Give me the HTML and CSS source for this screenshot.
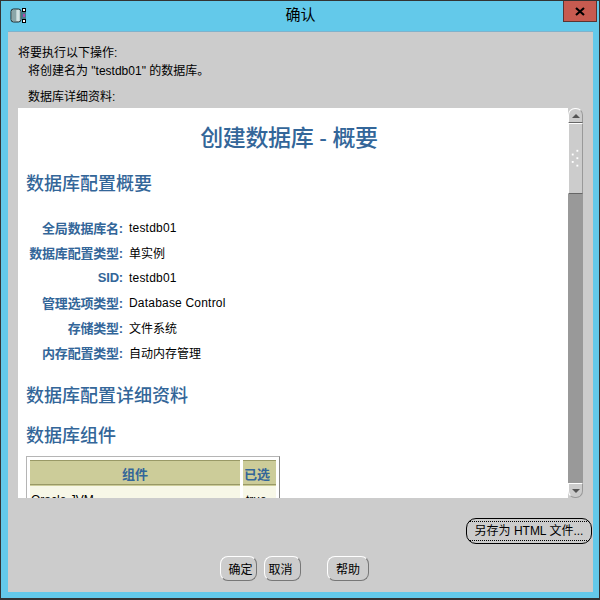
FILE: index.html
```html
<!DOCTYPE html>
<html lang="zh-CN">
<head>
    <meta charset="UTF-8">
    <title>确认</title>
    <link rel="stylesheet" href="styles.css">
</head>
<body>
    <div class="window">
        <div class="titlebar">
            <svg class="app-icon" width="17" height="16" viewBox="0 0 17 16">
                <rect x="1" y="1" width="10" height="13" rx="2.5" fill="#b9cfd0" stroke="#1c2b2e"/>
                <path d="M3 2v11M5 2v11" stroke="#5d7c80"/>
                <path d="M8 2v11" stroke="#eef5f5"/>
                <rect x="12" y="0" width="4" height="15" fill="#4a7c88"/>
                <rect x="12.5" y="0.5" width="3" height="3" fill="#fff" stroke="#000"/>
                <rect x="12.5" y="11.5" width="3" height="3" fill="#fff" stroke="#000"/>
                <rect x="13" y="6" width="2" height="3" fill="#b04bb0"/>
            </svg>
            <span class="title">确认</span>
            <div class="close">
                <svg width="10" height="9" viewBox="0 0 10 9">
                    <path d="M1 1l8 7M9 1l-8 7" stroke="#000" stroke-width="2.2"/>
                </svg>
            </div>
        </div>
        <div class="client">
            <p class="line">将要执行以下操作:</p>
            <p class="line indent">将创建名为 "testdb01" 的数据库。</p>
            <p class="line indent details">数据库详细资料:</p>
            <div class="pane">
                <div class="doc">
                    <h1>创建数据库 - 概要</h1>
                    <h2 class="first">数据库配置概要</h2>
                    <div class="summary">
                        <span class="key">全局数据库名:</span><span class="latin">testdb01</span>
                        <span class="key">数据库配置类型:</span><span>单实例</span>
                        <span class="key">SID:</span><span class="latin">testdb01</span>
                        <span class="key">管理选项类型:</span><span class="latin">Database Control</span>
                        <span class="key">存储类型:</span><span>文件系统</span>
                        <span class="key">内存配置类型:</span><span>自动内存管理</span>
                    </div>
                    <h2 class="detail">数据库配置详细资料</h2>
                    <h2 class="comp">数据库组件</h2>
                    <table class="comp-table">
                        <tr><th class="col-name">组件</th><th class="col-sel">已选</th></tr>
                        <tr><td>Oracle JVM</td><td class="cell-sel">true</td></tr>
                    </table>
                </div>
                <div class="scrollbar">
                    <div class="arrow up"><i></i></div>
                    <div class="thumb">
                        <svg width="14" height="24" viewBox="0 0 14 24">
                            <g fill="#fff">
                                <rect x="8" y="0" width="2" height="2"/>
                                <rect x="3" y="4" width="2" height="2"/>
                                <rect x="8" y="8" width="2" height="2"/>
                                <rect x="3" y="12" width="2" height="2"/>
                                <rect x="8" y="16" width="2" height="2"/>
                            </g>
                        </svg>
                    </div>
                    <div class="track"></div>
                    <div class="arrow down"><i></i></div>
                </div>
            </div>
            <div class="save-row">
                <button class="btn save"><span>另存为 HTML 文件...</span></button>
            </div>
            <div class="actions">
                <button class="btn ok">确定</button>
                <button class="btn cancel">取消</button>
                <button class="btn help">帮助</button>
            </div>
        </div>
    </div>
</body>
</html>
```

FILE: styles.css
```css
html, body {
    margin: 0;
    height: 100%;
}
body {
    font-family: "Liberation Sans", "Noto Sans CJK SC", sans-serif;
    font-size: 12px;
    color: #000;
}
.window {
    box-sizing: border-box;
    width: 600px;
    height: 600px;
    display: flex;
    flex-direction: column;
    background-color: #63c9ea;
    border: 1px solid #333;
    border-bottom-width: 2px;
    padding: 0 6px 6px 7px;
}
.titlebar {
    height: 30px;
    flex: none;
    display: flex;
    align-items: flex-start;
    justify-content: center;
    position: relative;
}
.app-icon {
    position: absolute;
    left: 2px;
    top: 7px;
}
.title {
    font-size: 15px;
    line-height: 28px;
}
.close {
    position: absolute;
    right: -4px;
    top: 0;
    box-sizing: border-box;
    width: 34px;
    height: 21px;
    background-color: #c75b50;
    border: 1px solid #5a3432;
    border-top: none;
    display: flex;
    align-items: center;
    justify-content: center;
}
.client {
    flex: 1;
    min-height: 0;
    background-color: #ccc;
    border-top: 1px solid #7fb2cc;
    padding: 12px 10px 0 10px;
    display: flex;
    flex-direction: column;
}
.line {
    margin: 0;
    line-height: 18px;
}
.indent {
    padding-left: 10px;
}
.details {
    margin-top: 8px;
    height: 20px;
}
.pane {
    flex: none;
    height: 390px;
    display: flex;
}
.doc {
    flex: 1;
    background-color: #fff;
    overflow: hidden;
    padding-left: 8px;
    color: #336699;
}
h1 {
    margin: 15px 0 0 0;
    padding-right: 16px;
    font-size: 23px;
    letter-spacing: -0.4px;
    line-height: 30px;
    font-weight: 500;
    text-align: center;
}
h2 {
    margin: 0;
    font-size: 18px;
    line-height: 24px;
    font-weight: 500;
}
h2.first {
    margin-top: 19px;
}
h2.detail {
    margin-top: 19px;
}
h2.comp {
    margin-top: 16px;
}
.summary {
    display: grid;
    grid-template-columns: 97px 1fr;
    column-gap: 6px;
    grid-auto-rows: 25px;
    align-items: center;
    margin-top: 19px;
    color: #000;
}
.latin {
    letter-spacing: 0.2px;
}
.key {
    font-size: 13px;
    font-weight: 700;
    letter-spacing: -0.2px;
    color: #336699;
    text-align: right;
    white-space: nowrap;
}
.comp-table {
    margin-top: 8px;
    width: 254px;
    border: 1px solid #b5b5b5;
    border-right-color: #888;
    border-collapse: separate;
    border-spacing: 3px 0;
    padding: 3px 0 0 0;
    color: #000;
}
.comp-table th {
    height: 22px;
    padding: 0 0 1px 0;
    background-color: #cccc99;
    border-top: 1px solid #999966;
    border-bottom: 1px solid #999966;
    color: #336699;
    font-size: 13px;
    font-weight: 700;
    vertical-align: bottom;
}
.col-sel {
    width: 32px;
}
.comp-table th.col-sel {
    text-align: left;
    padding-left: 1px;
}
.comp-table td {
    padding: 7px 1px 4px 1px;
    background-color: #f7f7e7;
    border-top: 1px solid #cccc99;
    line-height: 14px;
    white-space: nowrap;
}
.comp-table td.cell-sel {
    padding-left: 3px;
}
.scrollbar {
    flex: none;
    width: 15px;
    display: flex;
    flex-direction: column;
}
.arrow {
    box-sizing: border-box;
    height: 15px;
    flex: none;
    border: 1px solid #999;
    border-left-color: #fff;
    display: flex;
    align-items: center;
    justify-content: center;
}
.arrow i {
    width: 0;
    height: 0;
    border-left: 4px solid transparent;
    border-right: 4px solid transparent;
}
.up {
    border-radius: 7px 7px 0 0;
    border-top-color: #fff;
    border-bottom: 1px solid #666;
}
.up i {
    border-bottom: 4px solid #555;
}
.down {
    border-radius: 0 0 7px 7px;
    border-top-color: #fff;
}
.down i {
    border-top: 4px solid #555;
}
.thumb {
    box-sizing: border-box;
    height: 71px;
    flex: none;
    border-top: 1px solid #fff;
    border-left: 1px solid #fff;
    border-right: 1px solid #999;
    border-bottom: 1px solid #666;
    padding-top: 25px;
    display: flex;
    justify-content: center;
}
.thumb svg {
    display: block;
}
.track {
    flex: 1;
    background-color: #999;
}
.btn {
    box-sizing: border-box;
    height: 25px;
    padding: 0;
    font: inherit;
    background-color: #ccc;
    color: #000;
    border: 1px solid #777;
    border-top-color: #fff;
    border-left-color: #fff;
    border-radius: 8px;
}
.save-row {
    display: flex;
    justify-content: flex-end;
    margin-top: 20px;
    margin-right: -9px;
}
.save {
    width: 126px;
    height: 26px;
    border: 1px solid #000;
    border-radius: 10px;
    padding: 2px;
}
.save span {
    display: block;
    border-top: 1px dotted #000;
    border-bottom: 1px dotted #000;
    line-height: 18px;
}
.actions {
    display: flex;
    margin-top: 12px;
    padding-left: 202px;
}
.ok, .cancel {
    width: 37px;
}
.ok {
    padding-left: 4px;
}
.cancel {
    margin-left: 7px;
    padding-right: 4px;
}
.help {
    width: 42px;
    margin-left: 26px;
}
```
